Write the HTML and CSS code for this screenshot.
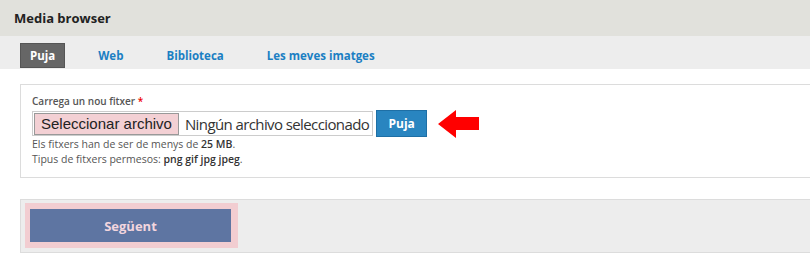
FILE: index.html
```html
<!DOCTYPE html>
<html>
<head>
<meta charset="utf-8">
<link rel="stylesheet" href="styles.css">
</head>
<body>
<div class="header"><h1 class="title">Media browser</h1></div>
<div class="tabs">
  <span class="tab active">Puja</span>
  <span class="tab">Web</span>
  <span class="tab">Biblioteca</span>
  <span class="tab">Les meves imatges</span>
</div>
<div class="content">
  <div class="fieldset">
    <div class="label">Carrega un nou fitxer <span class="req">*</span></div>
    <div class="row">
      <div class="file">
        <span class="file-btn">Seleccionar archivo</span>
        <span class="file-name">Ningún archivo seleccionado</span>
      </div>
      <span class="upload">Puja</span>
      <svg class="arrow" width="42" height="30" viewBox="0 0 42 30">
        <polygon points="0,15 18,1 18,8 41,8 41,21 18,21 18,29" fill="#ff0000"/>
      </svg>
    </div>
    <div class="desc">Els fitxers han de ser de menys de <b>25 MB</b>.</div>
    <div class="desc">Tipus de fitxers permesos: <b>png gif jpg jpeg</b>.</div>
  </div>
  <div class="actions">
    <div class="focus"><span class="next">Següent</span></div>
  </div>
</div>
</body>
</html>
```
FILE: styles.css
```css
html, body { margin: 0; padding: 0; background: #fff; overflow: hidden; }
body { font-family: "Open Sans", "DejaVu Sans", sans-serif; color: #333; }
.header { background: #e1e1dc; height: 36px; display: flex; align-items: center; padding-left: 14px; }
.title { margin: 0; font-size: 13px; font-weight: 700; color: #222; }
.tabs { background: #ededed; height: 33px; display: flex; align-items: flex-start; padding-left: 20px; gap: 23px; box-sizing: border-box; padding-top: 7px; }
.tab { height: 25px; box-sizing: border-box; padding: 0 10px; display: flex; align-items: center; font-size: 11.5px; font-weight: 700; color: #1b7fc3; }
.tab.active { background: #666; color: #fff; border: 1px solid #555; padding: 0 9px; }
.content { padding: 15px 0 0 20px; }
.fieldset { border: 1px solid #dcdcdc; border-right: none; padding: 9px 0 14px 11px; height: 94px; box-sizing: border-box; }
.label { font-size: 10px; font-weight: 600; color: #555; line-height: 14px; }
.req { color: #e00; }
.row { display: flex; align-items: center; margin-top: 2px; height: 27px; }
.file { display: flex; align-items: center; height: 25px; box-sizing: border-box; border: 1px solid #ccc; background: #fff; padding: 0 3px 0 1px; }
.file-btn { font-family: "Liberation Sans", Arial, sans-serif; font-size: 15px; color: #222; background: #f3d0d4; border: 1px solid #999; height: 22px; box-sizing: border-box; display: flex; align-items: center; padding: 0 6px; }
.file-name { font-family: "Open Sans", sans-serif; font-size: 15px; letter-spacing: -0.6px; color: #333; margin-left: 6px; }
.upload { margin-left: 3px; height: 27px; box-sizing: border-box; width: 51px; display: flex; align-items: center; justify-content: center; background: #2985c0; border: 1px solid #1e6fa5; color: #fff; font-size: 12px; font-weight: 700; }
.arrow { margin-left: 11px; }
.desc { font-size: 10.5px; line-height: 15px; color: #555; }
.desc b { font-weight: 600; color: #333; }
.actions { margin-top: 21px; background: #ededed; border: 1px solid #dcdcdc; border-right: none; height: 54px; box-sizing: border-box; padding: 3px 0 0 4px; }
.focus { display: inline-flex; background: #f2cdd1; padding: 6px 7px 6px 5px; }
.next { width: 201px; height: 33px; display: flex; align-items: center; justify-content: center; background: #5e75a2; color: #f3d6de; font-size: 13px; font-weight: 700; }
```
